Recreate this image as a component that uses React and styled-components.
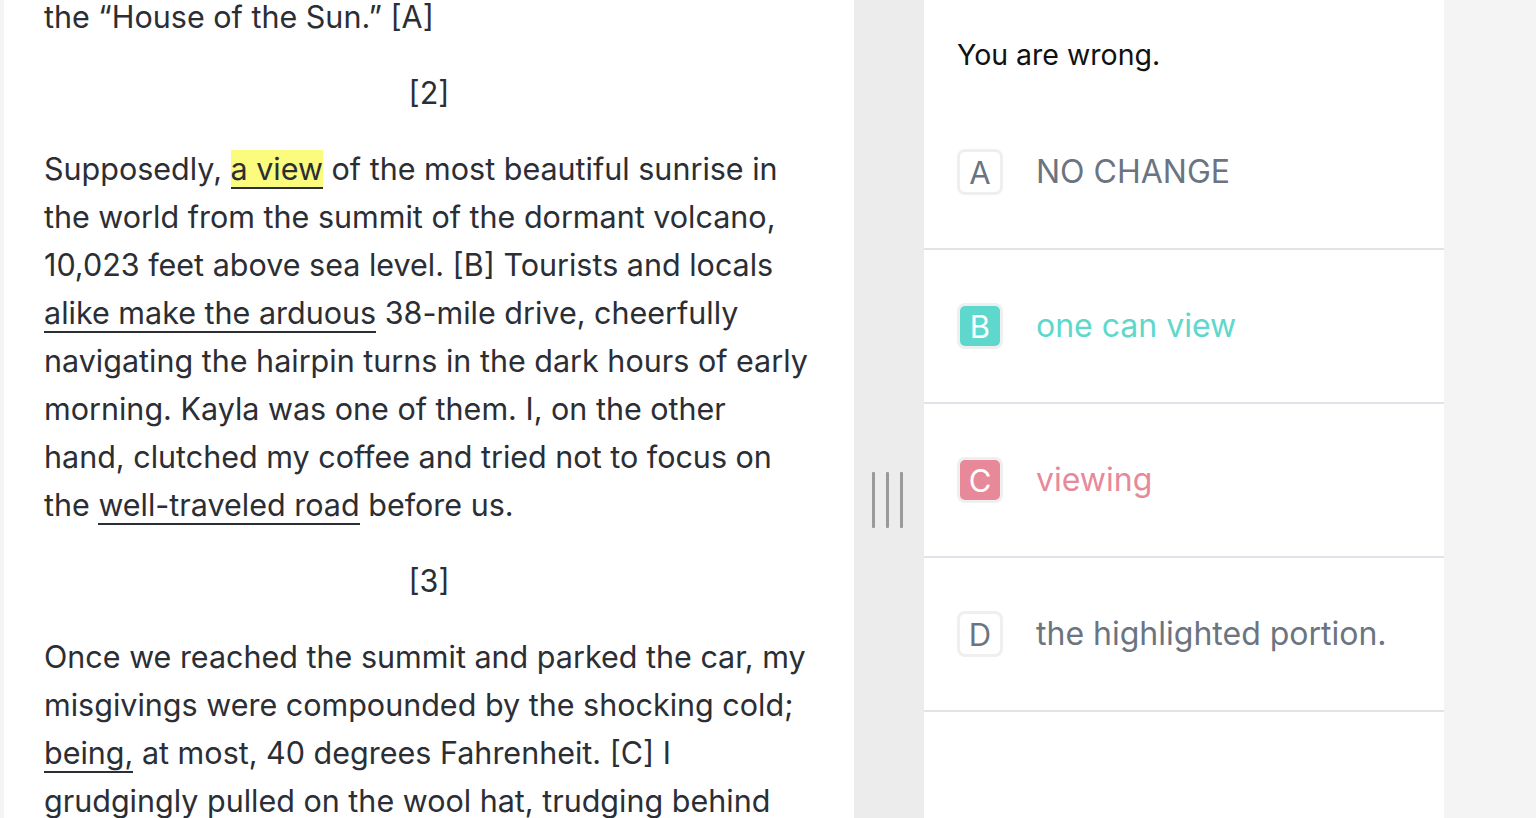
import React from 'react';
import styled, { createGlobalStyle } from 'styled-components';

const GlobalStyle = createGlobalStyle`
  html, body {
    margin: 0;
    padding: 0;
    background: #f4f4f4;
    font-family: Inter, "Noto Sans", "Liberation Sans", sans-serif;
  }
  * { box-sizing: border-box; }
`;

const Page = styled.div`
  display: flex;
  height: 100vh;
  padding-left: 4px;
  overflow: hidden;
`;

const Passage = styled.div`
  width: 850px;
  flex-shrink: 0;
  background: #ffffff;
  padding: 0 44px 0 40px;
  overflow: hidden;
  color: #2b2e34;
  font-size: 30.5px;
  line-height: 48px;
`;

const Paragraph = styled.p`
  margin: ${p => (p.$first ? '-7px' : '28px')} 0 0;
`;

const Marker = styled.div`
  margin-top: 28px;
  padding-left: 4px;
  text-align: center;
`;

const Underlined = styled.span`
  border-bottom: 2px solid #2b2e34;
  background: ${p => (p.$highlight ? '#fbfb7d' : 'transparent')};
`;

const Divider = styled.div`
  width: 70px;
  flex-shrink: 0;
  background: #ececec;
  padding-top: 182px;
  display: flex;
  align-items: center;
  justify-content: center;
`;

const Grip = styled.div`
  display: flex;
  gap: 11px;
  height: 56px;
  margin-right: 4px;
`;

const GripLine = styled.span`
  width: 3px;
  height: 100%;
  background: #9a9a9a;
  border-radius: 1px;
`;

const Answers = styled.div`
  width: 520px;
  flex-shrink: 0;
  background: #ffffff;
  display: flex;
  flex-direction: column;
`;

const Feedback = styled.div`
  height: 96px;
  padding: 38px 33px 0;
  font-size: 28.5px;
  line-height: 34px;
  color: #111111;
`;

const Option = styled.div`
  height: 154px;
  display: flex;
  align-items: center;
  gap: 33px;
  padding-left: 33px;
  border-bottom: 2px solid #e0e4e8;
`;

const LetterBox = styled.div`
  width: 46px;
  height: 46px;
  flex-shrink: 0;
  border: 3px solid #efefef;
  border-radius: 8px;
  display: flex;
`;

const Letter = styled.span`
  flex: 1;
  display: flex;
  align-items: center;
  justify-content: center;
  border-radius: 5px;
  font-size: 31px;
  line-height: 1;
  color: ${p => (p.$fill ? '#ffffff' : '#6b7480')};
  background: ${p => p.$fill || 'transparent'};
`;

const OptionText = styled.span`
  font-size: 32px;
  line-height: 40px;
  color: ${p => p.$color || '#6b7480'};
`;

const options = [
  { letter: 'A', text: 'NO CHANGE' },
  { letter: 'B', text: 'one can view', color: '#5ed8cc' },
  { letter: 'C', text: 'viewing', color: '#e8899a' },
  { letter: 'D', text: 'the highlighted portion.' },
];

export default function App() {
  return (
    <>
      <GlobalStyle />
      <Page>
        <Passage>
          <Paragraph $first>the “House of the Sun.” [A]</Paragraph>
          <Marker>[2]</Marker>
          <Paragraph>
            Supposedly, <Underlined $highlight>a view</Underlined> of the most beautiful sunrise in
            the world from the summit of the dormant volcano, 10,023 feet above sea level. [B]
            Tourists and locals <Underlined>alike make the arduous</Underlined> 38-mile drive,
            cheerfully navigating the hairpin turns in the dark hours of early morning. Kayla was one
            of them. I, on the other hand, clutched my coffee and tried not to focus on the{' '}
            <Underlined>well-traveled road</Underlined> before us.
          </Paragraph>
          <Marker>[3]</Marker>
          <Paragraph>
            Once we reached the summit and parked the car, my misgivings were compounded by the
            shocking cold; <Underlined>being,</Underlined> at most, 40 degrees Fahrenheit. [C] I
            grudgingly pulled on the wool hat, trudging behind Kayla toward the crowd gathered along
            the rim of the crater.
          </Paragraph>
        </Passage>
        <Divider>
          <Grip>
            <GripLine />
            <GripLine />
            <GripLine />
          </Grip>
        </Divider>
        <Answers>
          <Feedback>You are wrong.</Feedback>
          {options.map(o => (
            <Option key={o.letter}>
              <LetterBox>
                <Letter $fill={o.color}>{o.letter}</Letter>
              </LetterBox>
              <OptionText $color={o.color}>{o.text}</OptionText>
            </Option>
          ))}
        </Answers>
      </Page>
    </>
  );
}
